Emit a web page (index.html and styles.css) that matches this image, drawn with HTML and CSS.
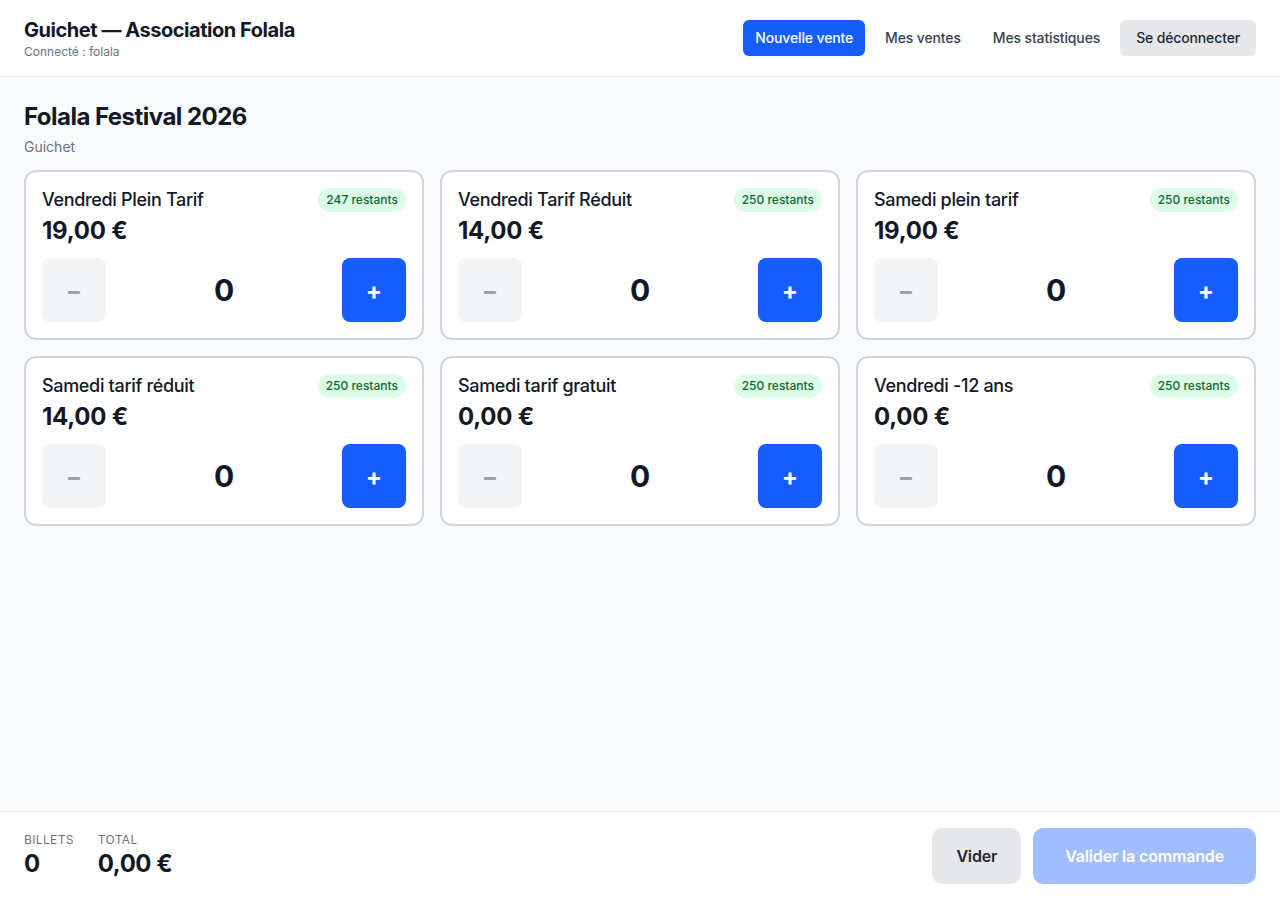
FILE: index.html
```html
<html>
	<head>
		<meta charset="UTF-8" />
		<meta name="viewport" content="width=device-width, initial-scale=1.0" />
		<title>Guichet — Association Folala</title>
		<link rel="stylesheet" href="styles.css">
	</head>
	<body>
		<header class="topbar">
			<div>
				<div class="brand">Guichet — Association Folala</div>
				<div class="user">Connecté : folala</div>
			</div>
			<nav class="nav">
				<button type="button" class="nav-btn active">Nouvelle vente</button>
				<button type="button" class="nav-btn">Mes ventes</button>
				<button type="button" class="nav-btn">Mes statistiques</button>
				<button type="button" class="nav-btn logout">Se déconnecter</button>
			</nav>
		</header>

		<main class="content">
			<h1 class="event">Folala Festival 2026</h1>
			<div class="event-sub">Guichet</div>

			<div class="tickets">
				<div class="ticket">
					<div class="ticket-head">
						<span class="ticket-name">Vendredi Plein Tarif</span>
						<span class="stock">247 restants</span>
					</div>
					<div class="price">19,00 €</div>
					<div class="qty">
						<button type="button" class="minus">−</button>
						<span class="count">0</span>
						<button type="button" class="plus">+</button>
					</div>
				</div>
				<div class="ticket">
					<div class="ticket-head">
						<span class="ticket-name">Vendredi Tarif Réduit</span>
						<span class="stock">250 restants</span>
					</div>
					<div class="price">14,00 €</div>
					<div class="qty">
						<button type="button" class="minus">−</button>
						<span class="count">0</span>
						<button type="button" class="plus">+</button>
					</div>
				</div>
				<div class="ticket">
					<div class="ticket-head">
						<span class="ticket-name">Samedi plein tarif</span>
						<span class="stock">250 restants</span>
					</div>
					<div class="price">19,00 €</div>
					<div class="qty">
						<button type="button" class="minus">−</button>
						<span class="count">0</span>
						<button type="button" class="plus">+</button>
					</div>
				</div>
				<div class="ticket">
					<div class="ticket-head">
						<span class="ticket-name">Samedi tarif réduit</span>
						<span class="stock">250 restants</span>
					</div>
					<div class="price">14,00 €</div>
					<div class="qty">
						<button type="button" class="minus">−</button>
						<span class="count">0</span>
						<button type="button" class="plus">+</button>
					</div>
				</div>
				<div class="ticket">
					<div class="ticket-head">
						<span class="ticket-name">Samedi tarif gratuit</span>
						<span class="stock">250 restants</span>
					</div>
					<div class="price">0,00 €</div>
					<div class="qty">
						<button type="button" class="minus">−</button>
						<span class="count">0</span>
						<button type="button" class="plus">+</button>
					</div>
				</div>
				<div class="ticket">
					<div class="ticket-head">
						<span class="ticket-name">Vendredi -12 ans</span>
						<span class="stock">250 restants</span>
					</div>
					<div class="price">0,00 €</div>
					<div class="qty">
						<button type="button" class="minus">−</button>
						<span class="count">0</span>
						<button type="button" class="plus">+</button>
					</div>
				</div>
			</div>
		</main>

		<footer class="cart">
			<div class="totals">
				<div>
					<div class="label">Billets</div>
					<div class="value">0</div>
				</div>
				<div>
					<div class="label">Total</div>
					<div class="value">0,00 €</div>
				</div>
			</div>
			<div class="actions">
				<button type="button" class="clear">Vider</button>
				<button type="button" class="submit" disabled>Valider la commande</button>
			</div>
		</footer>
	</body>
</html>
```

FILE: styles.css
```css
* {
	box-sizing: border-box;
}
body {
	margin: 0;
	min-height: 100vh;
	display: flex;
	flex-direction: column;
	font-family: Inter, "Noto Sans", sans-serif;
	color: #111827;
	background-color: #f9fafb;
}
button {
	font-family: inherit;
	border: none;
	cursor: pointer;
}

/* top bar */
.topbar {
	display: flex;
	justify-content: space-between;
	align-items: center;
	padding: 16px 24px;
	background-color: #fff;
	border-bottom: 1px solid #e5e7eb;
}
.brand {
	font-size: 20px;
	line-height: 28px;
	font-weight: 700;
	letter-spacing: -0.023em;
}
.user {
	font-size: 12px;
	line-height: 16px;
	color: #6b7280;
}
.nav {
	display: flex;
	gap: 8px;
}
.nav-btn {
	font-size: 14px;
	line-height: 20px;
	font-weight: 500;
	letter-spacing: -0.01em;
	padding: 8px 12px;
	border-radius: 6px;
	background: transparent;
	color: #374151;
}
.nav-btn.active {
	background-color: #155dfc;
	color: #fff;
}
.nav-btn.logout {
	background-color: #e5e7eb;
	color: #1f2937;
	padding: 8px 16px;
}

/* content */
.content {
	flex: 1;
	padding: 24px;
}
.event {
	margin: 0;
	font-size: 24px;
	line-height: 32px;
	font-weight: 700;
	letter-spacing: -0.022em;
}
.event-sub {
	margin-top: 4px;
	margin-bottom: 13px;
	font-size: 14px;
	line-height: 20px;
	color: #6b7280;
}
.tickets {
	display: grid;
	grid-template-columns: repeat(3, 1fr);
	gap: 16px;
}
.ticket {
	background-color: #fff;
	border: 2px solid #d1d5db;
	border-radius: 12px;
	padding: 16px;
}
.ticket-head {
	display: flex;
	justify-content: space-between;
	align-items: center;
}
.ticket-name {
	font-size: 18px;
	line-height: 24px;
	font-weight: 500;
	letter-spacing: -0.018em;
}
.stock {
	font-size: 12px;
	line-height: 16px;
	font-weight: 500;
	padding: 4px 8px;
	border-radius: 999px;
	background-color: #dcfce7;
	color: #166534;
}
.price {
	margin-top: 3px;
	font-size: 24px;
	line-height: 32px;
	font-weight: 700;
	letter-spacing: -0.01em;
}
.qty {
	margin-top: 11px;
	display: flex;
	justify-content: space-between;
	align-items: center;
}
.minus,
.plus {
	width: 64px;
	height: 64px;
	border-radius: 8px;
	font-size: 24px;
	font-weight: 700;
}
.minus {
	background-color: #f3f4f6;
	color: #9ca3af;
}
.plus {
	background-color: #155dfc;
	color: #fff;
}
.count {
	font-size: 30px;
	line-height: 36px;
	font-weight: 700;
}

/* cart footer */
.cart {
	display: flex;
	justify-content: space-between;
	align-items: center;
	padding: 16px 24px;
	background-color: #fff;
	border-top: 1px solid #e5e7eb;
}
.totals {
	display: flex;
	gap: 24px;
}
.label {
	font-size: 12px;
	line-height: 16px;
	text-transform: uppercase;
	letter-spacing: 0.03em;
	color: #6b7280;
}
.value {
	font-size: 24px;
	line-height: 32px;
	font-weight: 700;
	letter-spacing: -0.02em;
}
.actions {
	display: flex;
	gap: 12px;
}
.clear,
.submit {
	height: 56px;
	padding: 0 24px;
	border-radius: 10px;
	font-size: 16px;
	font-weight: 600;
	letter-spacing: -0.01em;
}
.clear {
	background-color: #e5e7eb;
	color: #1f2937;
}
.submit {
	padding: 0 32px;
	background-color: #155dfc;
	color: #fff;
}
.submit:disabled {
	opacity: 0.4;
	cursor: default;
}
```
